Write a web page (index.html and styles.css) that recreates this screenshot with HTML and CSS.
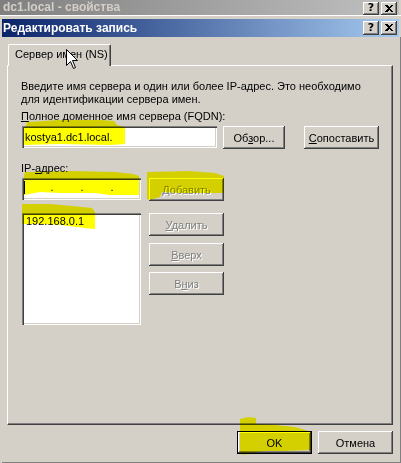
FILE: index.html
```html
<!DOCTYPE html>
<html lang="ru">
<head>
<meta charset="utf-8">
<title>Редактировать запись</title>
<link rel="stylesheet" href="styles.css">
</head>
<body>
<div class="screen">
  <div class="bgbar">
    <span class="bgtitle">dc1.local - свойства</span>
    <div class="caps caps-bg">
      <span class="cap">?</span>
      <span class="cap"><svg class="xglyph" width="8" height="7" viewBox="0 0 8 7"><path d="M0 0h2l2 2 2-2h2L5 3.5 8 7H6L4 5 2 7H0l3-3.5z"/></svg></span>
    </div>
  </div>
  <div class="dialog">
    <div class="titlebar">
      <span class="title">Редактировать запись</span>
      <div class="caps">
        <span class="cap">?</span>
        <span class="cap"><svg class="xglyph" width="8" height="7" viewBox="0 0 8 7"><path d="M0 0h2l2 2 2-2h2L5 3.5 8 7H6L4 5 2 7H0l3-3.5z"/></svg></span>
      </div>
    </div>
    <div class="body">
      <div class="tabs"><div class="tab">Сервер имен (NS)</div></div>
      <div class="panel">
        <p class="intro">Введите имя сервера и один или более IP-адрес. Это необходимо<br>для идентификации сервера имен.</p>
        <div class="label"><u>П</u>олное доменное имя сервера (FQDN):</div>
        <div class="fqdn-row">
          <div class="field fqdn">kostya1.dc1.local.</div>
          <button class="btn browse">Об<u>з</u>ор...</button>
          <button class="btn match"><u>С</u>опоставить</button>
        </div>
        <div class="label ip-label">IP-<u>а</u>дрес:</div>
        <div class="ip-grid">
          <div class="field ipbox"><span class="caret"></span><span class="seg first"></span><span class="dot">.</span><span class="seg"></span><span class="dot">.</span><span class="seg"></span><span class="dot">.</span></div>
          <button class="btn disabled"><u>Д</u>обавить</button>
          <div class="field list"><div class="item">192.168.0.1</div></div>
          <div class="side">
            <button class="btn disabled"><u>У</u>далить</button>
            <button class="btn disabled"><u>В</u>верх</button>
            <button class="btn disabled down">В<u>н</u>из</button>
          </div>
        </div>
      </div>
      <div class="footer">
        <button class="btn default">OK</button>
        <button class="btn">Отмена</button>
      </div>
    </div>
  </div>
  <svg class="marks" width="401" height="463" viewBox="0 0 401 463">
    <polygon points="27,122 60,120 100,120 114,121 117,125 125,127 125,144 110,145 60,144 24,145 24,128 26,126"/>
    <polygon points="25,172 70,171 115,172 133,174 139,176 139,195 110,195 95,193 60,193 40,192 24,195 24,176"/>
    <polygon points="147,172 190,171 215,173 224,176 224,193 180,193 162,192 160,197 150,200 147,199"/>
    <polygon points="22,204 50,204 72,206 92,208 95,212 95,229 85,228 60,225 40,224 22,224"/>
    <polygon points="240,419 248,417 256,418 256,424 275,425 295,427 305,430 311,432 311,450 285,451 265,451 250,453 244,455 240,452"/>
  </svg>
  <svg class="cursor" width="13" height="21" viewBox="0 0 13 21"><path d="M0.5 0.5V16.5L4.5 12.5L7.5 19.5L9.5 18.5L6.5 11.5H11.5Z"/></svg>
</div>
</body>
</html>
```

FILE: styles.css
```css
* { box-sizing: border-box; }
html, body { margin: 0; padding: 0; }
body {
  width: 401px;
  height: 463px;
  overflow: hidden;
  background: #d4d0c8;
  font-family: "Liberation Sans", Arial, sans-serif;
  font-size: 11px;
  color: #000;
}
.screen {
  position: relative;
  width: 401px;
  height: 463px;
  display: flex;
  flex-direction: column;
}

/* background (inactive) window caption */
.bgbar {
  height: 15px;
  flex: none;
  margin-right: 2px;
  padding: 0 2px 0 3px;
  background: linear-gradient(to right, #808080, #c0c0c0);
  display: flex;
  justify-content: space-between;
}
.bgtitle {
  color: #d4d0c8;
  font-weight: bold;
  font-size: 12px;
  line-height: 15px;
}
.caps { display: flex; gap: 2px; margin-top: 2px; }
.cap {
  width: 16px;
  height: 14px;
  background: #d4d0c8;
  box-shadow: inset -1px -1px #404040, inset 1px 1px #fff, inset -2px -2px #808080;
  display: flex;
  align-items: center;
  justify-content: center;
  font: bold 11px "DejaVu Sans", sans-serif;
  line-height: 14px;
  padding-bottom: 1px;
}
.caps-bg .cap { height: 13px; }
.xglyph { display: block; shape-rendering: crispEdges; }
.xglyph path { fill: #000; }

/* dialog */
.dialog {
  flex: 1;
  display: flex;
  flex-direction: column;
  border-top: 1px solid #fff;
  padding: 3px 0 0 2px;
}
.titlebar {
  height: 18px;
  flex: none;
  margin-right: 2px;
  padding: 0 2px 0 1px;
  background: linear-gradient(to right, #0a246a, #a6caf0);
  display: flex;
  justify-content: space-between;
}
.titlebar .caps { margin-top: 2px; }
.title {
  color: #fff;
  font-weight: bold;
  font-size: 12px;
  line-height: 18px;
}
.body {
  flex: 1;
  padding: 7px 7px 0 5px;
  border-right: 1px solid #808080;
  border-bottom: 1px solid #808080;
}

/* tab */
.tabs { height: 21px; display: flex; }
.tab {
  position: relative;
  z-index: 1;
  margin-left: 1px;
  width: 103px;
  height: 22px;
  background: #d4d0c8;
  border-top: 1px solid #fff;
  border-left: 1px solid #fff;
  border-right: 1px solid #404040;
  border-radius: 2px 2px 0 0;
  box-shadow: inset -1px 0 #808080;
  padding: 3px 0 0 6px;
  line-height: 13px;
  white-space: nowrap;
}
.panel {
  height: 360px;
  border-top: 1px solid #fff;
  border-left: 1px solid #fff;
  border-right: 1px solid #404040;
  border-bottom: 1px solid #404040;
  box-shadow: inset -1px -1px #808080;
  padding: 14px 0 0 13px;
}
.intro { margin: 0 0 4px; line-height: 13px; white-space: nowrap; }
.label { line-height: 13px; }
.ip-label { margin-top: 13px; }

/* controls */
.btn {
  display: block;
  height: 23px;
  padding: 0;
  border: none;
  background: #d4d0c8;
  box-shadow: inset -1px -1px #404040, inset 1px 1px #fff, inset -2px -2px #808080;
  font: 11px "Liberation Sans", Arial, sans-serif;
  color: #000;
  text-align: center;
}
.btn.disabled { color: #808080; text-shadow: 1px 1px #fff; }
.btn.default {
  border: 1px solid #000;
}
.field {
  background: #fff;
  box-shadow: inset 1px 1px #808080, inset 2px 2px #404040, inset -1px -1px #fff, inset -2px -2px #d4d0c8;
}
.fqdn-row { display: flex; align-items: flex-start; margin-top: 3px; }
.fqdn {
  margin-left: 1px;
  width: 195px;
  height: 22px;
  padding-left: 3px;
  line-height: 22px;
}
.browse { width: 62px; margin-left: 6px; }
.match { width: 75px; margin-left: 19px; }

.ip-grid {
  margin-top: 3px;
  display: grid;
  grid-template-columns: 120px 75px;
  grid-template-rows: 23px 112px;
  column-gap: 8px;
  row-gap: 12px;
  align-items: start;
}
.ip-grid .btn { width: 75px; }
.ipbox {
  margin-left: 1px;
  width: 119px;
  height: 22px;
  padding: 3px 0 0 2px;
  display: flex;
  align-items: flex-start;
  line-height: 13px;
}
.caret { width: 1px; height: 13px; background: #000; flex: none; }
.seg { width: 26px; flex: none; }
.seg.first { width: 25px; }
.dot { width: 4px; text-align: center; flex: none; }
.list {
  margin-left: 1px;
  width: 119px;
  height: 112px;
  padding: 2px 0 0 4px;
  line-height: 13px;
}
.side { display: flex; flex-direction: column; gap: 7px; }
.side .down { margin-top: -1px; }

.footer {
  margin-top: 6px;
  display: flex;
  justify-content: flex-end;
  gap: 6px;
}
.footer .btn { width: 75px; }

/* overlays */
.marks {
  position: absolute;
  left: 0;
  top: 0;
  z-index: 5;
  pointer-events: none;
  mix-blend-mode: multiply;
}
.marks polygon { fill: #ffff00; }
.cursor {
  position: absolute;
  left: 66px;
  top: 49px;
  z-index: 6;
  pointer-events: none;
}
.cursor path { fill: #fff; stroke: #000; stroke-width: 1; }
```
